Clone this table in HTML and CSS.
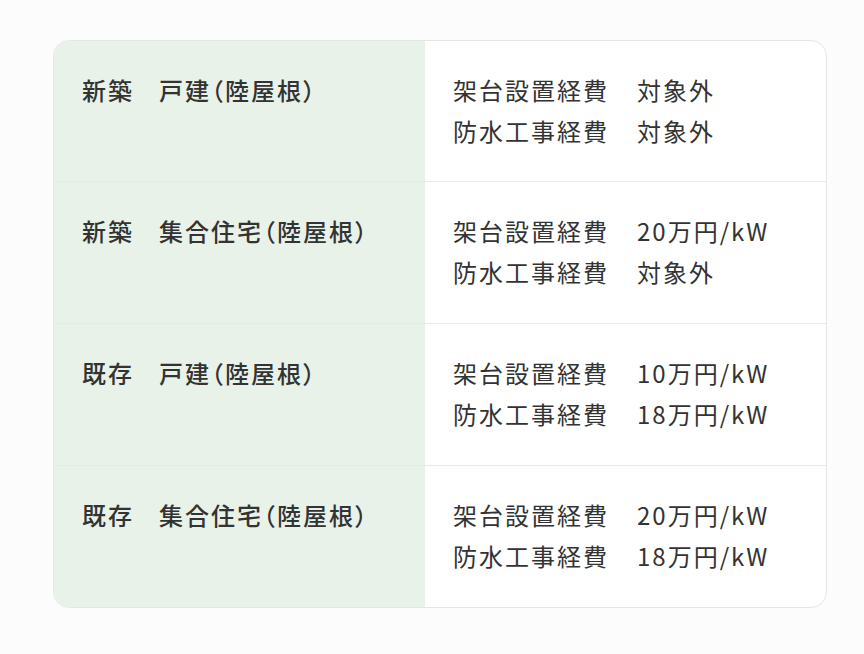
FILE: index.html
```html
<!DOCTYPE html>
<html lang="ja">
<head>
<meta charset="utf-8">
<link rel="stylesheet" href="styles.css">
</head>
<body>
<div class="page">
  <div class="table">
    <div class="row">
      <div class="head"><span class="kind">新築</span><span class="name">戸建（陸屋根）</span></div>
      <div class="body">
        <div class="line"><span class="label">架台設置経費</span><span class="value">対象外</span></div>
        <div class="line"><span class="label">防水工事経費</span><span class="value">対象外</span></div>
      </div>
    </div>
    <div class="row">
      <div class="head"><span class="kind">新築</span><span class="name">集合住宅（陸屋根）</span></div>
      <div class="body">
        <div class="line"><span class="label">架台設置経費</span><span class="value">20万円/kW</span></div>
        <div class="line"><span class="label">防水工事経費</span><span class="value">対象外</span></div>
      </div>
    </div>
    <div class="row">
      <div class="head"><span class="kind">既存</span><span class="name">戸建（陸屋根）</span></div>
      <div class="body">
        <div class="line"><span class="label">架台設置経費</span><span class="value">10万円/kW</span></div>
        <div class="line"><span class="label">防水工事経費</span><span class="value">18万円/kW</span></div>
      </div>
    </div>
    <div class="row">
      <div class="head"><span class="kind">既存</span><span class="name">集合住宅（陸屋根）</span></div>
      <div class="body">
        <div class="line"><span class="label">架台設置経費</span><span class="value">20万円/kW</span></div>
        <div class="line"><span class="label">防水工事経費</span><span class="value">18万円/kW</span></div>
      </div>
    </div>
  </div>
</div>
</body>
</html>
```

FILE: styles.css
```css
html, body {
  margin: 0;
  padding: 0;
  background: #fcfcfc;
}
body {
  font-family: "Noto Sans CJK JP", "Noto Sans", sans-serif;
  color: #333333;
}
.page {
  padding: 40px 37px 46px 53px;
}
.table {
  width: 774px;
  border: 1px solid #e6e6e6;
  border-radius: 16px;
  overflow: hidden;
  background: #ffffff;
  box-sizing: border-box;
}
.row {
  display: grid;
  grid-template-columns: 371px 1fr;
  height: 142px;
  border-top: 1px solid #e9e9e9;
  box-sizing: border-box;
}
.row:first-child {
  border-top: none;
  height: 140px;
}
.head {
  background: #e9f2e8;
  padding: 28px 0 0 28px;
  font-size: 24px;
  font-weight: 500;
  letter-spacing: 2px;
  line-height: 41px;
  display: flex;
  font-feature-settings: "palt";
}
.kind {
  margin-right: 25px;
}
.body {
  padding: 28px 0 0 28px;
  font-size: 24px;
  letter-spacing: 2px;
  line-height: 41px;
}
.line {
  display: flex;
}
.label {
  margin-right: 28px;
}
```
